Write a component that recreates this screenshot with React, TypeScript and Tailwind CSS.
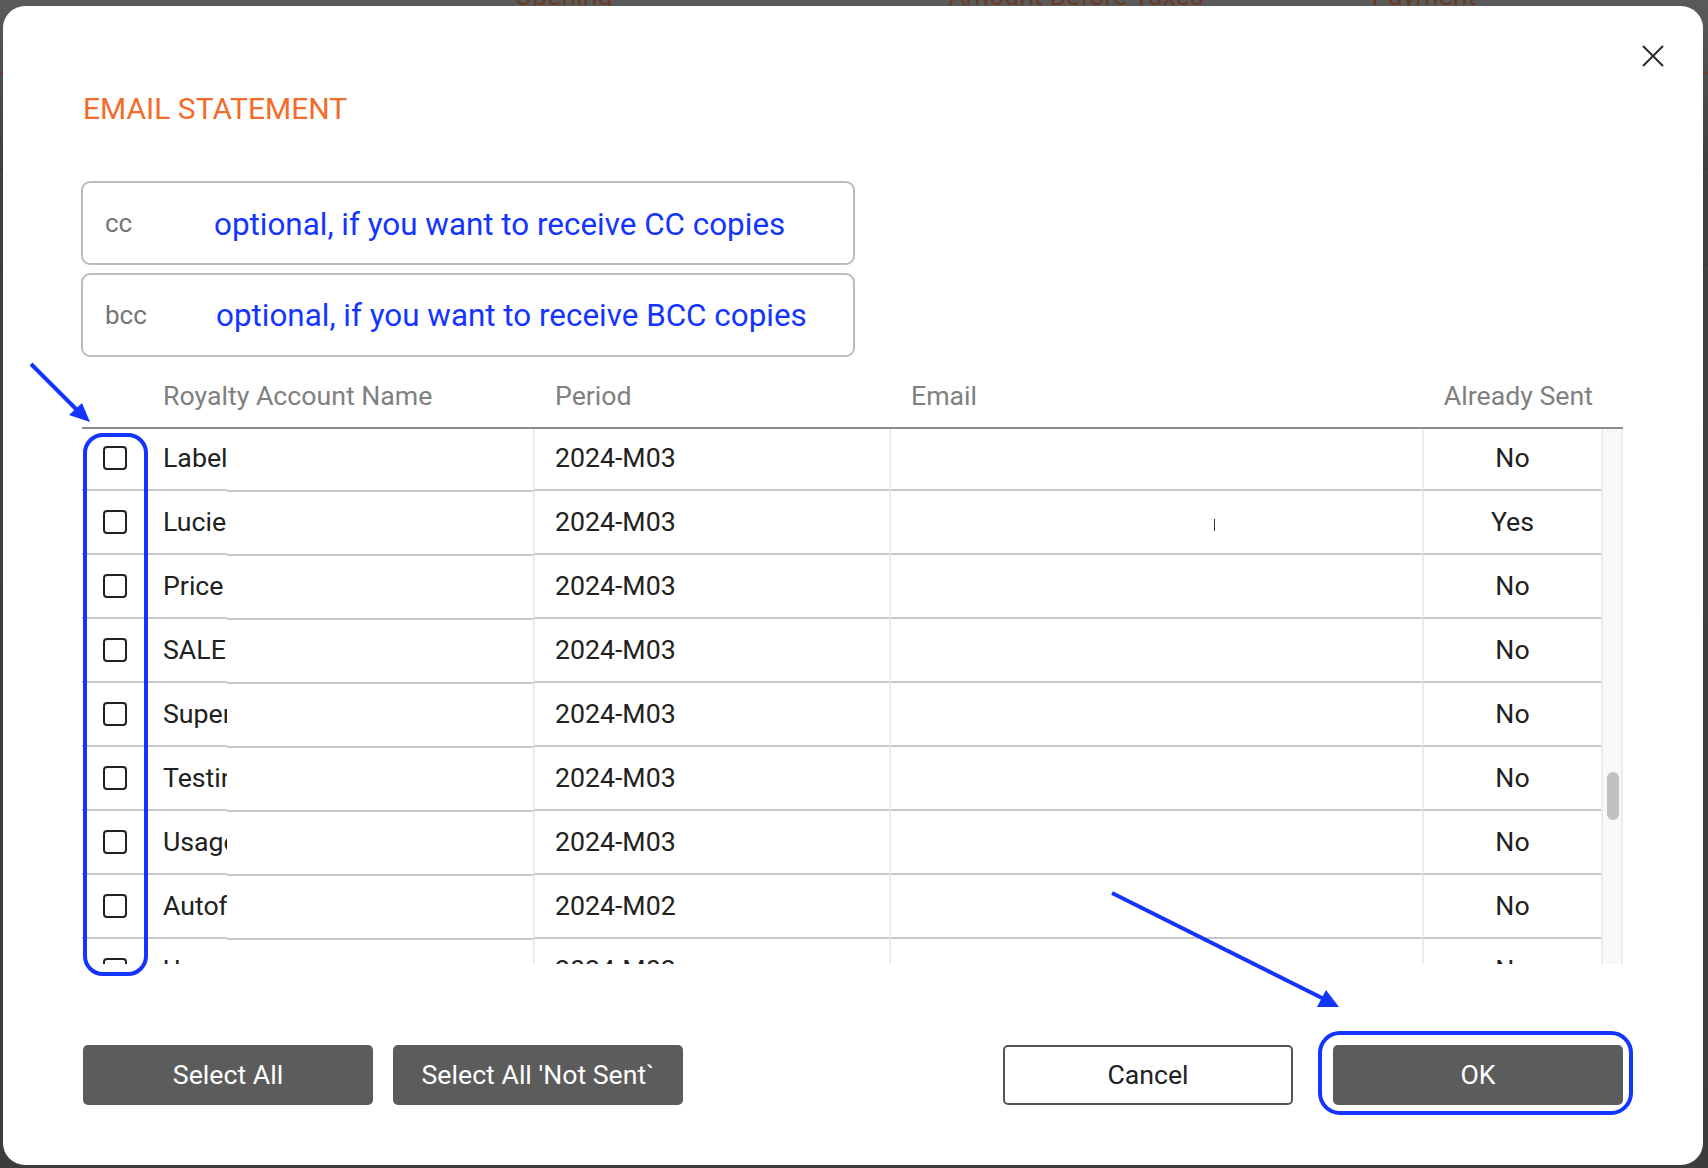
const rows = [
  { name: 'Label', period: '2024-M03', sent: 'No' },
  { name: 'Lucie', period: '2024-M03', sent: 'Yes' },
  { name: 'Price', period: '2024-M03', sent: 'No' },
  { name: 'SALE', period: '2024-M03', sent: 'No' },
  { name: 'Super', period: '2024-M03', sent: 'No' },
  { name: 'Testing', period: '2024-M03', sent: 'No' },
  { name: 'Usage', period: '2024-M03', sent: 'No' },
  { name: 'Autofill', period: '2024-M02', sent: 'No' },
  { name: 'Usage', period: '2024-M02', sent: 'No' },
];

function Annotations() {
  return (
    <>
      <div className="absolute left-[83px] top-[433px] h-[543px] w-[65px] rounded-[20px] border-4 border-[#1434ff]" />
      <div className="absolute left-[1318px] top-[1031px] h-[84px] w-[315px] rounded-[22px] border-4 border-[#1434ff]" />
      <svg className="absolute left-0 top-0 h-[1168px] w-[1708px]" viewBox="0 0 1708 1168" fill="none">
        <path d="M31 364L78 411" stroke="#1434ff" strokeWidth="4" />
        <path d="M90 422L69 415L82 403Z" fill="#1434ff" />
        <path d="M1112 893L1326 1000" stroke="#1434ff" strokeWidth="4" />
        <path d="M1339 1007L1326 990L1317 1007Z" fill="#1434ff" />
      </svg>
    </>
  );
}

function Backdrop() {
  return (
    <div className="absolute inset-0 overflow-hidden">
      <div className="flex h-[11px] items-end text-[26.7px] leading-[30px] text-[#6b3a24]">
        <span className="ml-[514px] whitespace-nowrap">Opening</span>
        <span className="ml-[336px] whitespace-nowrap">Amount Before Taxes</span>
        <span className="ml-[168px] whitespace-nowrap">Payment</span>
      </div>
      <div className="mt-[61px] h-[2px] bg-[#6b3a24]" />
      <div className="mt-[94px] h-[2px] bg-[#3a3a3a]" />
      <div className="mt-[94px] h-[2px] bg-[#3a3a3a]" />
    </div>
  );
}

function CcField({ label, hint, hintClass }: { label: string; hint: string; hintClass: string }) {
  return (
    <div className="-ml-px flex h-[84px] w-[774px] items-center rounded-[9px] border-2 border-[#bcbcbc] pl-[22px]">
      <span className="w-[108px] text-[26px] text-[#757575]">{label}</span>
      <span className={`text-[31.4px] text-[#1434ff] ${hintClass}`}>{hint}</span>
    </div>
  );
}

export default function App() {
  return (
    <div className="relative h-[1168px] w-[1708px] overflow-hidden bg-[linear-gradient(#5a5a5a_0px,#414141_150px,#3c3c3c_100%)] pb-[3px] pl-[3px] pr-[5px] pt-[6px] font-['Roboto',sans-serif] text-[#212121]">
      <Backdrop />
      <div className="relative h-[1159px] rounded-[22px] bg-white pl-[79px] pr-[80px] pt-[86px]">
        <svg className="absolute right-[39px] top-[39px] h-[22px] w-[22px]" viewBox="0 0 22 22" fill="none">
          <path d="M1 1L21 21M21 1L1 21" stroke="#2a2a2a" strokeWidth="2" />
        </svg>

        <h2 className="ml-px text-[30px] leading-[34px] text-[#f26b2a]">EMAIL STATEMENT</h2>

        <div className="mt-[55px] flex flex-col gap-2">
          <CcField label="cc" hint="optional, if you want to receive CC copies" hintClass="ml-px mt-[4px]" />
          <CcField label="bcc" hint="optional, if you want to receive BCC copies" hintClass="ml-[3px] mt-px" />
        </div>

        <div className="flex h-[72px] items-center border-b-2 border-[#8c8c8c] pt-[8px] text-[26.7px] text-[#808080]">
          <span className="ml-[81px] w-[392px]">Royalty Account Name</span>
          <span className="w-[356px]">Period</span>
          <span className="w-[532px]">Email</span>
          <span className="w-[150px] text-right">Already Sent</span>
        </div>

        <div className="flex h-[535px] overflow-hidden text-[26.7px]">
          <div className="w-[1519px]">
            {rows.map((row, i) => (
              <div key={i} className={`flex ${i === 0 ? 'h-[62px]' : 'h-[64px]'}`}>
                <div className={`flex w-[145px] items-center border-b-2 border-[#c8c8c8] ${i === 0 ? 'pb-[2px]' : ''}`}>
                  <span className="ml-[21px] h-[24px] w-[24px] shrink-0 rounded-[4px] border-2 border-[#222222]" />
                  <span className="ml-[36px] w-[64px] overflow-hidden whitespace-nowrap">{row.name}</span>
                </div>
                <div className="-mb-px w-[306px] border-b-2 border-[#c8c8c8]" />
                <div className={`flex w-[356px] items-center border-b-2 border-l-2 border-[#c8c8c8] border-l-[#ececec] pl-[20px] ${i === 0 ? 'pb-[2px]' : ''}`}>
                  {row.period}
                </div>
                <div className="flex w-[533px] items-center justify-center border-b-2 border-l-2 border-[#c8c8c8] border-l-[#ececec]">
                  {i === 1 && <span className="ml-[116px] mt-[6px] h-[12px] w-px bg-[#333333]" />}
                </div>
                <div className={`flex w-[179px] items-center justify-center border-b-2 border-l-2 border-[#c8c8c8] border-l-[#ececec] ${i === 0 ? 'pb-[2px]' : ''}`}>
                  {row.sent}
                </div>
              </div>
            ))}
          </div>
          <div className="w-[22px] border-x-2 border-[#ececec] bg-[#f8f8f8] pl-[4px] pt-[343px]">
            <div className="h-[48px] w-[12px] rounded-full bg-[#c0c0c0]" />
          </div>
        </div>

        <div className="ml-px mt-[81px] flex text-[26.7px]">
          <button className="h-[60px] w-[290px] rounded-[5px] bg-[#5c5c5c] text-white">Select All</button>
          <button className="ml-[20px] h-[60px] w-[290px] rounded-[5px] bg-[#5c5c5c] text-white">Select All 'Not Sent`</button>
          <button className="ml-[320px] h-[60px] w-[290px] rounded-[5px] border-2 border-[#555555] bg-white">Cancel</button>
          <button className="ml-[40px] h-[60px] w-[290px] rounded-[5px] bg-[#5c5c5c] text-white">OK</button>
        </div>
      </div>
      <Annotations />
    </div>
  );
}
